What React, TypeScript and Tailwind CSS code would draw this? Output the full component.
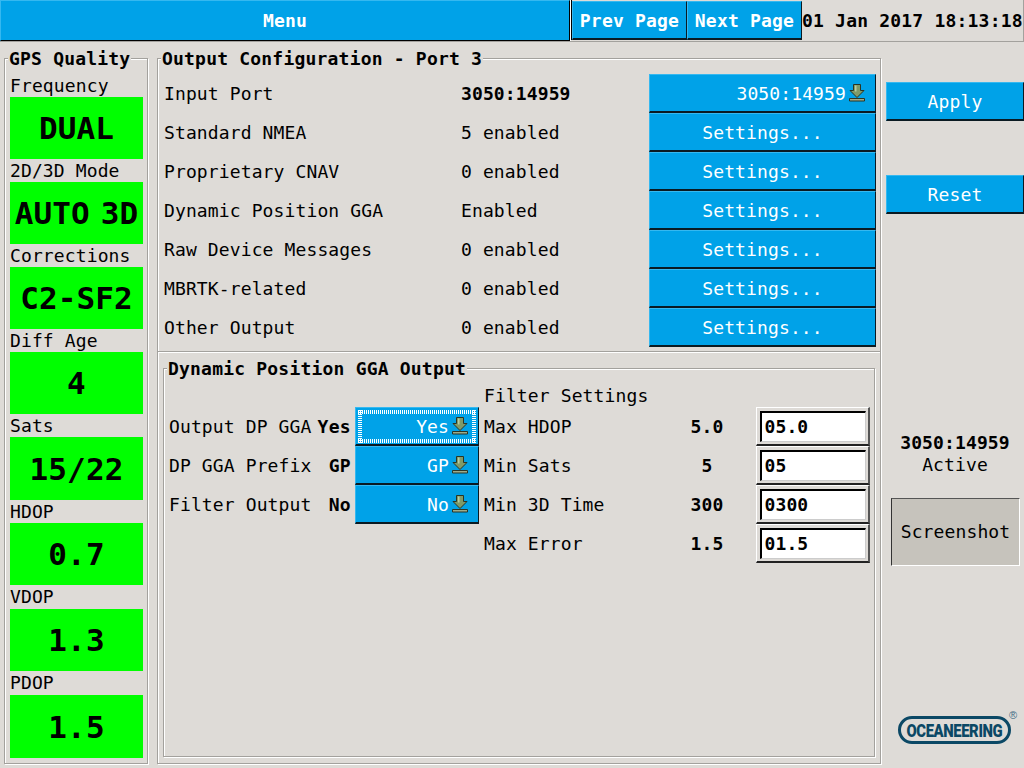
import React from "react";

const BTN = "bg-[#00a2e8] text-white pt-px border-t border-l border-t-[#35b8f0] border-l-[#35b8f0] border-b-2 border-r border-b-[#0a1a22] border-r-[#0a1a22]";

function ArrowIcon() {
  return (
    <svg width="16" height="18" viewBox="0 0 16 18" className="shrink-0 -mt-px">
      <path d="M4.5 .5h7v6h3.5L8 13.5 1 6.5h3.5z" fill="#7f9a68" stroke="#2a3524" strokeWidth="1" />
      <path d="M6 1.5h1.5v6H6z" fill="#b9cba4" />
      <path d="M.5 14.5h15v2.5H.5z" fill="#9dac8b" stroke="#2a3524" strokeWidth="1" />
    </svg>
  );
}

function FocusRing() {
  const h = "absolute h-[4px] bg-[repeating-linear-gradient(90deg,#ffffff_0_1px,transparent_1px_2px)]";
  const v = "absolute w-[4px] bg-[repeating-linear-gradient(0deg,#ffffff_0_1px,transparent_1px_2px)]";
  return (
    <>
      <div className={h + " top-[2px] left-[2px] right-[2px]"} />
      <div className={h + " bottom-[1px] left-[2px] right-[2px]"} />
      <div className={v + " top-[2px] bottom-[1px] left-[2px]"} />
      <div className={v + " top-[2px] bottom-[1px] right-[2px]"} />
    </>
  );
}

function Group({ title, className, titleClass, children }: { title: string; className: string; titleClass: string; children: React.ReactNode }) {
  return (
    <div className={"relative border border-[#a3a19d] shadow-[1px_1px_0_#ffffff,inset_1px_1px_0_#ffffff] " + className}>
      <div className={"absolute -top-[10px] bg-[#dedbd7] font-bold text-[18px] leading-[20px] tracking-[0.2px] whitespace-pre " + titleClass}>{title}</div>
      {children}
    </div>
  );
}

const quality = [
  { label: "Frequency", value: "DUAL", lh: "h-[23px]", h: "h-[62px]", size: "" },
  { label: "2D/3D Mode", value: "AUTO 3D", lh: "h-[23px]", h: "h-[62px]", size: "[word-spacing:-8px]" },
  { label: "Corrections", value: "C2-SF2", lh: "h-[23px]", h: "h-[62px]", size: "" },
  { label: "Diff Age", value: "4", lh: "h-[23px]", h: "h-[62px]", size: "" },
  { label: "Sats", value: "15/22", lh: "h-[23px]", h: "h-[63px]", size: "" },
  { label: "HDOP", value: "0.7", lh: "h-[23px]", h: "h-[62px]", size: "" },
  { label: "VDOP", value: "1.3", lh: "h-[24px]", h: "h-[62px]", size: "" },
  { label: "PDOP", value: "1.5", lh: "h-[24px]", h: "h-[63px]", size: "" },
];

const outputs = [
  { label: "Input Port", value: "3050:14959", bold: true, combo: true },
  { label: "Standard NMEA", value: "5 enabled" },
  { label: "Proprietary CNAV", value: "0 enabled" },
  { label: "Dynamic Position GGA", value: "Enabled" },
  { label: "Raw Device Messages", value: "0 enabled" },
  { label: "MBRTK-related", value: "0 enabled" },
  { label: "Other Output", value: "0 enabled" },
];

const dp = [
  { label: "Output DP GGA", value: "Yes", focus: true },
  { label: "DP GGA Prefix", value: "GP" },
  { label: "Filter Output", value: "No" },
];

const filters = [
  { label: "Max HDOP", value: "5.0", input: "05.0" },
  { label: "Min Sats", value: "5", input: "05" },
  { label: "Min 3D Time", value: "300", input: "0300" },
  { label: "Max Error", value: "1.5", input: "01.5" },
];

export default function App() {
  return (
    <div className="w-[1024px] h-[768px] overflow-hidden bg-[#dedbd7] text-black font-['DejaVu_Sans_Mono',monospace] text-[18px] leading-[22px] tracking-[0.12px] flex flex-col">
      <header className="h-[42px] shrink-0 flex border-b border-[#a3a19d]">
        <div className="w-[570px] shrink-0 flex items-center justify-center font-bold bg-[#00a2e8] text-white border-t border-l border-t-[#35b8f0] border-l-[#35b8f0] border-b border-r border-b-black border-r-black">Menu</div>
        <div className="flex shrink-0 border-l border-l-white bg-[#dedbd7]">
          <div className="flex h-[40px] pt-[1px] border-l border-black">
            <div className={"w-[115px] shrink-0 flex items-center justify-center font-bold tracking-[0.2px] " + BTN}>Prev Page</div>
            <div className={"w-[115px] shrink-0 flex items-center justify-center font-bold tracking-[0.2px] " + BTN}>Next Page</div>
          </div>
        </div>
        <div className="flex-1 flex items-center justify-start font-bold tracking-[0.2px] whitespace-pre border-r border-[#a3a19d]">01 Jan 2017 18:13:18</div>
      </header>

      <div className="flex flex-1 pt-[16px] pl-[4px]">
        <Group title="GPS Quality" className="w-[144px] h-[706px] pt-[15px] px-[5px] flex flex-col" titleClass="left-[3px] px-[1px]">
          {quality.map((q) => (
            <div key={q.label} className="flex flex-col">
              <div className={"flex items-center " + q.lh}>{q.label}</div>
              <div className={"w-[133px] bg-[#00ff00] flex items-center justify-center font-bold text-[31px] " + q.h + " " + q.size}>{q.value}</div>
            </div>
          ))}
        </Group>

        <Group title="Output Configuration - Port 3" className="ml-[9px] w-[724px] h-[706px] flex flex-col" titleClass="left-[3px] px-[1px]">
          <div className="h-[293px] pt-[15px] pl-[6px] pr-[4px] border-b border-[#a3a19d] shadow-[0_1px_0_#ffffff]">
            {outputs.map((o) => (
              <div key={o.label} className="h-[39px] flex items-center">
                <div className="w-[297px] whitespace-pre">{o.label}</div>
                <div className={"w-[188px] whitespace-pre " + (o.bold ? "font-bold" : "")}>{o.value}</div>
                <div className={"w-[227px] h-[39px] flex items-center " + (o.combo ? "justify-end pr-[10px] gap-[3px] " : "justify-center ") + BTN}>
                  {o.combo ? (
                    <>
                      <span>{o.value}</span>
                      <ArrowIcon />
                    </>
                  ) : (
                    <span>Settings...</span>
                  )}
                </div>
              </div>
            ))}
          </div>

          <Group title="Dynamic Position GGA Output" className="mt-[16px] ml-[5px] w-[712px] h-[389px] flex pl-[5px]" titleClass="left-[3px] px-[1px]">
            <div className="w-[310px] pt-[38px]">
              {dp.map((d) => (
                <div key={d.label} className="h-[39px] flex items-center">
                  <div className="w-[144px] whitespace-pre">{d.label}</div>
                  <div className="w-[38px] text-right font-bold tracking-[0.3px]">{d.value}</div>
                  <div className={"relative ml-[4px] w-[124px] h-[39px] flex items-center justify-end pr-[10px] gap-[3px] " + BTN}>
                    {d.focus ? <FocusRing /> : null}
                    <span>{d.value}</span>
                    <ArrowIcon />
                  </div>
                </div>
              ))}
            </div>
            <div className="w-[391px] pt-[15px] pl-[5px]">
              <div className="h-[23px] flex items-center">Filter Settings</div>
              {filters.map((f) => (
                <div key={f.label} className="h-[39px] flex items-center">
                  <div className="w-[189px] whitespace-pre">{f.label}</div>
                  <div className="w-[68px] text-center font-bold">{f.value}</div>
                  <div className="ml-[15px] w-[114px] h-[39px] border-t border-l border-t-white border-l-white border-r-2 border-b-2 border-r-[#555] border-b-[#222] flex items-center justify-center bg-[#dedbd7]">
                    <div className="w-[106px] h-[31px] bg-white border-t-2 border-l-2 border-t-black border-l-black border-r border-b border-r-[#ccc] border-b-[#ccc] pl-[3px] font-bold flex items-center">
                      {f.input}
                    </div>
                  </div>
                </div>
              ))}
            </div>
          </Group>
        </Group>

        <div className="ml-[5px] flex-1 flex flex-col">
          <div className={"mt-[24px] h-[39px] flex items-center justify-center " + BTN}>Apply</div>
          <div className={"mt-[54px] h-[39px] flex items-center justify-center " + BTN}>Reset</div>
          <div className="mt-[218px] text-center font-bold h-[22px]">3050:14959</div>
          <div className="text-center h-[23px]">Active</div>
          <div className="mt-[21px] ml-[5px] w-[129px] h-[68px] bg-[#c6c3bc] border-t border-l border-t-[#555] border-l-[#333] border-r border-b border-r-white border-b-white flex items-center justify-center">Screenshot</div>
          <div className="mt-[150px] ml-[12px] w-[125px] flex items-start">
            <div className="w-[113px] h-[28px] border-[3px] border-[#0b4865] rounded-full flex items-center justify-center overflow-hidden">
              <span className="font-['Roboto',sans-serif] font-black text-[#0b4865] text-[19px] leading-none tracking-[-0.5px] scale-x-[0.78] whitespace-pre">OCEANEERING</span>
            </div>
            <div className="text-[11px] leading-none text-[#3f6d86] -mt-[6px] -ml-[2px] font-['Liberation_Sans',sans-serif]">®</div>
          </div>
        </div>
      </div>
    </div>
  );
}
